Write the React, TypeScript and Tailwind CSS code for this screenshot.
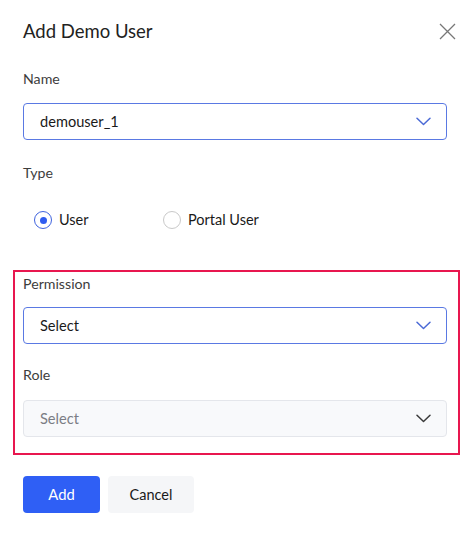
import React from "react";

function Chevron({ color }: { color: string }) {
  return (
    <svg width="15" height="9" viewBox="0 0 15 9" fill="none">
      <path d="M1 1.2L7.5 7.5L14 1.2" stroke={color} strokeWidth="1.5" strokeLinecap="round" strokeLinejoin="round" />
    </svg>
  );
}

function SelectBox({ value, disabled }: { value: string; disabled?: boolean }) {
  return (
    <div
      className={
        "w-[424px] h-[37px] rounded-[4px] flex items-center justify-between pl-[16px] pr-[15px] " +
        (disabled ? "border border-[#e4e6eb] bg-[#f8f9fb]" : "border border-[#5a79e3] bg-white")
      }
    >
      <span className={"text-[14.6px] " + (disabled ? "text-[#7b7d84]" : "text-[#1a1a1a]")}>{value}</span>
      <Chevron color={disabled ? "#3a3a3a" : "#4b6ad6"} />
    </div>
  );
}

export default function App() {
  return (
    <div className="w-[474px] h-[536px] bg-white" style={{ fontFamily: "Lato, 'Open Sans', sans-serif" }}>
      <div className="flex items-center justify-between pl-[23px] pr-[18px] pt-[17px]">
        <span className="text-[18.5px] leading-[28px] text-[#222]">Add Demo User</span>
        <svg width="17" height="17" viewBox="0 0 17 17" fill="none">
          <path d="M1 1L16 16M16 1L1 16" stroke="#777" strokeWidth="1.3" />
        </svg>
      </div>

      <div className="px-[23px]">
        <div className="mt-[24px] text-[14.2px] leading-[20px] text-[#3d3d3d]">Name</div>
        <div className="mt-[14px]">
          <SelectBox value="demouser_1" />
        </div>

        <div className="mt-[23px] text-[14.2px] leading-[20px] text-[#3d3d3d]">Type</div>
        <div className="mt-[27px] flex items-center pl-[11px]">
          <div className="flex items-center w-[129px]">
            <div className="w-[18px] h-[18px] rounded-full border-[1.5px] border-[#3f63de] flex items-center justify-center">
              <div className="w-[7px] h-[7px] rounded-full bg-[#2f5cf0]" />
            </div>
            <span className="ml-[7px] text-[14.5px] leading-[20px] text-[#1a1a1a]">User</span>
          </div>
          <div className="flex items-center">
            <div className="w-[18px] h-[18px] rounded-full border-[1.5px] border-[#c9c9c9]" />
            <span className="ml-[7px] text-[14.5px] leading-[20px] text-[#1a1a1a]">Portal User</span>
          </div>
        </div>
      </div>

      <div className="mt-[40px] ml-[13px] w-[447px] border-2 border-[#e8174f] pl-[8px] pt-[2px] pb-[16px]">
        <div className="text-[14.2px] leading-[20px] text-[#3d3d3d]">Permission</div>
        <div className="mt-[13px]">
          <SelectBox value="Select" />
        </div>
        <div className="mt-[21px] text-[14.2px] leading-[20px] text-[#3d3d3d]">Role</div>
        <div className="mt-[15px]">
          <SelectBox value="Select" disabled />
        </div>
      </div>

      <div className="mt-[21px] pl-[23px] flex gap-[8px]">
        <div className="w-[77px] h-[37px] rounded-[4px] bg-[#2f5ff5] flex items-center justify-center text-[14.8px] text-white">
          Add
        </div>
        <div className="w-[86px] h-[37px] rounded-[4px] bg-[#f5f6f8] flex items-center justify-center text-[14.5px] text-[#1a1a1a]">
          Cancel
        </div>
      </div>
    </div>
  );
}
